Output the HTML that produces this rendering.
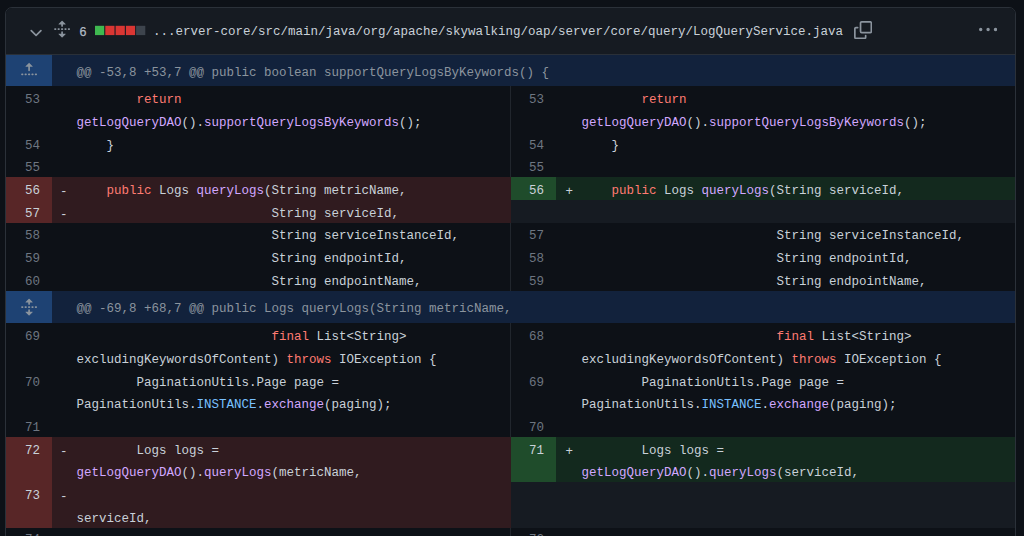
<!DOCTYPE html>
<html><head><meta charset="utf-8"><style>
html,body{margin:0;padding:0}
body{width:1024px;height:536px;overflow:hidden;background:#0d1117;position:relative;font-family:"Liberation Mono",monospace}
.file{position:absolute;left:5px;top:7px;width:1009px;height:560px;border:1px solid #2b3139;border-radius:7px;overflow:hidden;background:#0d1117}
.bg,.ln,.ico,.sq,.stat,.div{position:absolute}
.ln{font-size:12.51px;line-height:22.75px;white-space:pre;color:#c9d1d9;height:22.75px}
.num{text-align:right;color:#6e7681}
.num.chg{color:#c9d1d9}
.hunk{color:#8b949e}
.k{color:#ff7b72} .f{color:#d2a8ff} .c{color:#79c0ff}
.ico{fill:#8b949e}
.hico{fill:#c9d1d9}
.sq{top:25.8px;width:9.2px;height:9.2px}
.stat{-webkit-text-stroke:0.25px #b1bac4;font-family:"Liberation Sans",sans-serif;font-size:12.5px;line-height:16px;color:#b1bac4}
</style></head><body>
<div class="file"></div>
<div class="bg" style="left:510px;top:54px;width:1px;height:482px;background:#21262d"></div>
<div class="bg" style="left:6px;top:55.0px;width:1009px;height:31.4px;background:#12223c"></div>
<div class="bg" style="left:6px;top:55.0px;width:46px;height:31.4px;background:#1e4273"></div>
<div class="ln hunk" style="left:76.5px;top:62.03px">@@ -53,8 +53,7 @@ public boolean supportQueryLogsByKeywords() {</div>
<svg class="ico" style="left:19.7px;top:60.7px" width="18.2" height="18.2" viewBox="0 0 16 16"><path d="M7.823 1.677 4.927 4.573A.25.25 0 0 0 5.104 5H7.25v3.236a.75.75 0 1 0 1.5 0V5h2.146a.25.25 0 0 0 .177-.427L8.177 1.677a.25.25 0 0 0-.354 0ZM13.75 11a.75.75 0 0 0 0 1.5h.5a.75.75 0 0 0 0-1.5h-.5Zm-3.75.75a.75.75 0 0 1 .75-.75h.5a.75.75 0 0 1 0 1.5h-.5a.75.75 0 0 1-.75-.75ZM7.75 11a.75.75 0 0 0 0 1.5h.5a.75.75 0 0 0 0-1.5h-.5ZM4 11.75a.75.75 0 0 1 .75-.75h.5a.75.75 0 0 1 0 1.5h-.5a.75.75 0 0 1-.75-.75ZM1.75 11a.75.75 0 0 0 0 1.5h.5a.75.75 0 0 0 0-1.5h-.5Z"/></svg>
<div class="ln num" style="left:6px;width:34px;top:89.1px">53</div>
<div class="ln" style="left:76.5px;top:89.1px">        <span class="k">return</span></div>
<div class="ln" style="left:76.5px;top:111.82px"><span class="f">getLogQueryDAO</span>().<span class="f">supportQueryLogsByKeywords</span>();</div>
<div class="ln num" style="left:511px;width:33px;top:89.1px">53</div>
<div class="ln" style="left:581.5px;top:89.1px">        <span class="k">return</span></div>
<div class="ln" style="left:581.5px;top:111.82px"><span class="f">getLogQueryDAO</span>().<span class="f">supportQueryLogsByKeywords</span>();</div>
<div class="ln num" style="left:6px;width:34px;top:134.54px">54</div>
<div class="ln" style="left:76.5px;top:134.54px">    }</div>
<div class="ln num" style="left:511px;width:33px;top:134.54px">54</div>
<div class="ln" style="left:581.5px;top:134.54px">    }</div>
<div class="ln num" style="left:6px;width:34px;top:157.26px">55</div>
<div class="ln num" style="left:511px;width:33px;top:157.26px">55</div>
<div class="bg" style="left:6px;top:177.28px;width:46px;height:22.72px;background:#582627"></div>
<div class="bg" style="left:52px;top:177.28px;width:459px;height:22.72px;background:#301b1f"></div>
<div class="ln num chg" style="left:6px;width:34px;top:179.98px">56</div>
<div class="ln" style="left:60px;top:180.98px">-</div>
<div class="ln" style="left:76.5px;top:179.98px">    <span class="k">public</span> Logs <span class="f">queryLogs</span>(String metricName,</div>
<div class="bg" style="left:511px;top:177.28px;width:45px;height:22.72px;background:#1f4c2b"></div>
<div class="bg" style="left:556px;top:177.28px;width:459px;height:22.72px;background:#13291e"></div>
<div class="ln num chg" style="left:511px;width:33px;top:179.98px">56</div>
<div class="ln" style="left:565.5px;top:180.98px">+</div>
<div class="ln" style="left:581.5px;top:179.98px">    <span class="k">public</span> Logs <span class="f">queryLogs</span>(String serviceId,</div>
<div class="bg" style="left:6px;top:200.0px;width:46px;height:22.72px;background:#582627"></div>
<div class="bg" style="left:52px;top:200.0px;width:459px;height:22.72px;background:#301b1f"></div>
<div class="ln num chg" style="left:6px;width:34px;top:202.7px">57</div>
<div class="ln" style="left:60px;top:203.7px">-</div>
<div class="ln" style="left:76.5px;top:202.7px">                          String serviceId,</div>
<div class="bg" style="left:511px;top:200.0px;width:504px;height:22.72px;background:#161b22"></div>
<div class="ln num" style="left:6px;width:34px;top:225.42px">58</div>
<div class="ln" style="left:76.5px;top:225.42px">                          String serviceInstanceId,</div>
<div class="ln num" style="left:511px;width:33px;top:225.42px">57</div>
<div class="ln" style="left:581.5px;top:225.42px">                          String serviceInstanceId,</div>
<div class="ln num" style="left:6px;width:34px;top:248.14px">59</div>
<div class="ln" style="left:76.5px;top:248.14px">                          String endpointId,</div>
<div class="ln num" style="left:511px;width:33px;top:248.14px">58</div>
<div class="ln" style="left:581.5px;top:248.14px">                          String endpointId,</div>
<div class="ln num" style="left:6px;width:34px;top:270.86px">60</div>
<div class="ln" style="left:76.5px;top:270.86px">                          String endpointName,</div>
<div class="ln num" style="left:511px;width:33px;top:270.86px">59</div>
<div class="ln" style="left:581.5px;top:270.86px">                          String endpointName,</div>
<div class="bg" style="left:6px;top:290.88px;width:1009px;height:32.5px;background:#12223c"></div>
<div class="bg" style="left:6px;top:290.88px;width:46px;height:32.5px;background:#1e4273"></div>
<div class="ln hunk" style="left:76.5px;top:298.45px">@@ -69,8 +68,7 @@ public Logs queryLogs(String metricName,</div>
<svg class="ico" style="left:19.7px;top:297.78px" width="18.2" height="18.2" viewBox="0 0 16 16"><path d="m8.177.677 2.896 2.896a.25.25 0 0 1-.177.427H8.75v1.25a.75.75 0 0 1-1.5 0V4H5.104a.25.25 0 0 1-.177-.427L7.823.677a.25.25 0 0 1 .354 0ZM7.25 10.75a.75.75 0 0 1 1.5 0V12h2.146a.25.25 0 0 1 .177.427l-2.896 2.896a.25.25 0 0 1-.354 0l-2.896-2.896A.25.25 0 0 1 5.104 12H7.25v-1.25Zm-5-2a.75.75 0 0 0 0-1.5h-.5a.75.75 0 0 0 0 1.5h.5ZM6 8a.75.75 0 0 1-.75.75h-.5a.75.75 0 0 1 0-1.5h.5A.75.75 0 0 1 6 8Zm2.25.75a.75.75 0 0 0 0-1.5h-.5a.75.75 0 0 0 0 1.5h.5ZM12 8a.75.75 0 0 1-.75.75h-.5a.75.75 0 0 1 0-1.5h.5A.75.75 0 0 1 12 8Zm2.25.75a.75.75 0 0 0 0-1.5h-.5a.75.75 0 0 0 0 1.5h.5Z"/></svg>
<div class="ln num" style="left:6px;width:34px;top:326.08px">69</div>
<div class="ln" style="left:76.5px;top:326.08px">                          <span class="k">final</span> List&lt;String&gt;</div>
<div class="ln" style="left:76.5px;top:348.8px">excludingKeywordsOfContent) <span class="k">throws</span> IOException {</div>
<div class="ln num" style="left:511px;width:33px;top:326.08px">68</div>
<div class="ln" style="left:581.5px;top:326.08px">                          <span class="k">final</span> List&lt;String&gt;</div>
<div class="ln" style="left:581.5px;top:348.8px">excludingKeywordsOfContent) <span class="k">throws</span> IOException {</div>
<div class="ln num" style="left:6px;width:34px;top:371.52px">70</div>
<div class="ln" style="left:76.5px;top:371.52px">        PaginationUtils.Page page =</div>
<div class="ln" style="left:76.5px;top:394.24px">PaginationUtils.<span class="c">INSTANCE</span>.<span class="f">exchange</span>(paging);</div>
<div class="ln num" style="left:511px;width:33px;top:371.52px">69</div>
<div class="ln" style="left:581.5px;top:371.52px">        PaginationUtils.Page page =</div>
<div class="ln" style="left:581.5px;top:394.24px">PaginationUtils.<span class="c">INSTANCE</span>.<span class="f">exchange</span>(paging);</div>
<div class="ln num" style="left:6px;width:34px;top:416.96px">71</div>
<div class="ln num" style="left:511px;width:33px;top:416.96px">70</div>
<div class="bg" style="left:6px;top:436.98px;width:46px;height:45.44px;background:#582627"></div>
<div class="bg" style="left:52px;top:436.98px;width:459px;height:45.44px;background:#301b1f"></div>
<div class="ln num chg" style="left:6px;width:34px;top:439.68px">72</div>
<div class="ln" style="left:60px;top:440.68px">-</div>
<div class="ln" style="left:76.5px;top:439.68px">        Logs logs =</div>
<div class="ln" style="left:76.5px;top:462.4px"><span class="f">getLogQueryDAO</span>().<span class="f">queryLogs</span>(metricName,</div>
<div class="bg" style="left:511px;top:436.98px;width:45px;height:45.44px;background:#1f4c2b"></div>
<div class="bg" style="left:556px;top:436.98px;width:459px;height:45.44px;background:#13291e"></div>
<div class="ln num chg" style="left:511px;width:33px;top:439.68px">71</div>
<div class="ln" style="left:565.5px;top:440.68px">+</div>
<div class="ln" style="left:581.5px;top:439.68px">        Logs logs =</div>
<div class="ln" style="left:581.5px;top:462.4px"><span class="f">getLogQueryDAO</span>().<span class="f">queryLogs</span>(serviceId,</div>
<div class="bg" style="left:6px;top:482.42px;width:46px;height:45.44px;background:#582627"></div>
<div class="bg" style="left:52px;top:482.42px;width:459px;height:45.44px;background:#301b1f"></div>
<div class="ln num chg" style="left:6px;width:34px;top:485.12px">73</div>
<div class="ln" style="left:60px;top:486.12px">-</div>
<div class="ln" style="left:76.5px;top:507.84px">serviceId,</div>
<div class="bg" style="left:511px;top:482.42px;width:504px;height:45.44px;background:#161b22"></div>
<div class="ln num" style="left:6px;width:34px;top:529.36px">74</div>
<div class="ln num" style="left:511px;width:33px;top:529.36px">72</div>

<div class="bg" style="left:6px;top:8px;width:1009px;height:46px;background:#161b22;border-radius:6px 6px 0 0"></div>
<div class="bg" style="left:6px;top:54px;width:1009px;height:1px;background:#2a3038"></div>
<svg class="ico" style="left:26.5px;top:23.6px" width="18.2" height="18.2" viewBox="0 0 16 16"><path d="M12.78 5.22a.749.749 0 0 1 0 1.06l-4.25 4.25a.749.749 0 0 1-1.06 0L3.22 6.28a.749.749 0 0 1 .326-1.275.749.749 0 0 1 .734.215L8 8.939l3.72-3.719a.749.749 0 0 1 1.06 0Z"/></svg>
<svg class="ico" style="left:53px;top:20px" width="18.2" height="18.2" viewBox="0 0 16 16"><path d="m8.177.677 2.896 2.896a.25.25 0 0 1-.177.427H8.75v1.25a.75.75 0 0 1-1.5 0V4H5.104a.25.25 0 0 1-.177-.427L7.823.677a.25.25 0 0 1 .354 0ZM7.25 10.75a.75.75 0 0 1 1.5 0V12h2.146a.25.25 0 0 1 .177.427l-2.896 2.896a.25.25 0 0 1-.354 0l-2.896-2.896A.25.25 0 0 1 5.104 12H7.25v-1.25Zm-5-2a.75.75 0 0 0 0-1.5h-.5a.75.75 0 0 0 0 1.5h.5ZM6 8a.75.75 0 0 1-.75.75h-.5a.75.75 0 0 1 0-1.5h.5A.75.75 0 0 1 6 8Zm2.25.75a.75.75 0 0 0 0-1.5h-.5a.75.75 0 0 0 0 1.5h.5ZM12 8a.75.75 0 0 1-.75.75h-.5a.75.75 0 0 1 0-1.5h.5A.75.75 0 0 1 12 8Zm2.25.75a.75.75 0 0 0 0-1.5h-.5a.75.75 0 0 0 0 1.5h.5Z"/></svg>
<div class="stat" style="left:79.5px;top:23.5px">6</div>
<svg class="ico" style="left:94px;top:25px" width="53" height="12" viewBox="0 0 53 12"><rect x="1" y="0.8" width="9.2" height="9.3" fill="#3fb950"/><rect x="11.3" y="0.8" width="9.2" height="9.3" fill="#da3633"/><rect x="21.6" y="0.8" width="9.2" height="9.3" fill="#da3633"/><rect x="31.9" y="0.8" width="9.2" height="9.3" fill="#da3633"/><rect x="42.1" y="0.8" width="9.2" height="9.3" fill="#3d444d"/></svg>
<div class="ln path" style="left:153px;top:20.62px">...erver-core/src/main/java/org/apache/skywalking/oap/server/core/query/LogQueryService.java</div>
<svg class="ico" style="left:853.9px;top:20.9px" width="18.2" height="18.2" viewBox="0 0 16 16"><path d="M0 6.75C0 5.784.784 5 1.75 5h1.5a.75.75 0 0 1 0 1.5h-1.5a.25.25 0 0 0-.25.25v7.5c0 .138.112.25.25.25h7.5a.25.25 0 0 0 .25-.25v-1.5a.75.75 0 0 1 1.5 0v1.5A1.75 1.75 0 0 1 9.25 16h-7.5A1.75 1.75 0 0 1 0 14.25Z"/><path d="M5 1.75C5 .784 5.784 0 6.75 0h7.5C15.216 0 16 .784 16 1.75v7.5A1.75 1.75 0 0 1 14.25 11h-7.5A1.75 1.75 0 0 1 5 9.25Zm1.75-.25a.25.25 0 0 0-.25.25v7.5c0 .138.112.25.25.25h7.5a.25.25 0 0 0 .25-.25v-7.5a.25.25 0 0 0-.25-.25Z"/></svg>
<svg class="ico" style="left:978.8px;top:21.3px" width="18.2" height="18.2" viewBox="0 0 16 16"><path d="M8 9a1.5 1.5 0 1 0 0-3 1.5 1.5 0 0 0 0 3ZM1.5 9a1.5 1.5 0 1 0 0-3 1.5 1.5 0 0 0 0 3Zm13 0a1.5 1.5 0 1 0 0-3 1.5 1.5 0 0 0 0 3Z"/></svg>

</body></html>
